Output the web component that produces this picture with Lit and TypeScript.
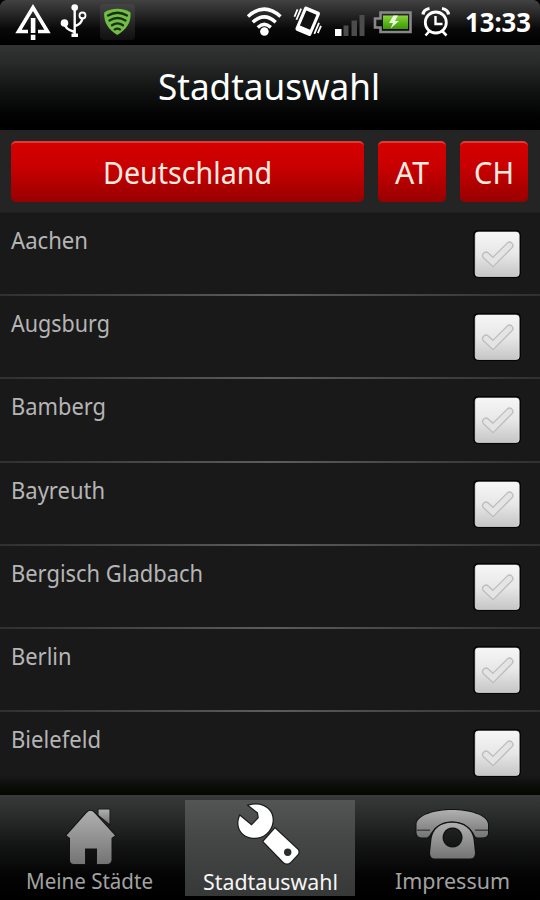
import { LitElement, html, css, svg } from "lit";
import { customElement, property } from "lit/decorators.js";

/** One line of text condensed or stretched to a set width. */
@customElement("fit-text")
class FitText extends LitElement {
  @property() text = "";
  @property({ type: Number }) size = 24;
  @property({ type: Number }) width = 100;
  @property({ type: Number }) weight = 400;

  static styles = css`
    :host { display: block; line-height: 0; }
    svg { display: block; overflow: visible; }
    text { font-family: "Noto Sans", "Open Sans", sans-serif; fill: currentColor; }
  `;

  render() {
    const h = Math.round(this.size * 1.3);
    return html`<svg width=${this.width} height=${h}>
      <text x="0" y=${this.size} font-size=${this.size} font-weight=${this.weight}
        textLength=${this.width} lengthAdjust="spacingAndGlyphs">${this.text}</text>
    </svg>`;
  }
}

@customElement("status-bar")
class StatusBar extends LitElement {
  static styles = css`
    :host { display: block; height: 45px; background: linear-gradient(#424242 0, #272727 14px, #080808 29px, #000 44px); }
    .bar { position: relative; height: 45px; }
    svg { display: block; }
    .clock { position: absolute; left: 465px; top: 6px; color: #fff; }
  `;
  render() {
    return html`<div class="bar">
      <svg width="540" height="45" viewBox="0 0 540 45" fill="none">
        <defs>
          <linearGradient id="bt" x1="0" y1="0" x2="0" y2="1">
            <stop offset="0" stop-color="#8fd13c" /><stop offset=".5" stop-color="#5cb81a" /><stop offset="1" stop-color="#3f960b" />
          </linearGradient>
          <linearGradient id="tile" x1="0" y1="0" x2="0" y2="1">
            <stop offset="0" stop-color="#484848" /><stop offset="1" stop-color="#151515" />
          </linearGradient>
        </defs>
        <path d="M0 0H6Q1 1 0 6ZM540 0H534Q539 1 540 6Z" fill="#000" />
        <path d="M28 31.5H18.5L33 7.5L47.5 31.5H38" stroke="#fff" stroke-width="3.6" />
        <path d="M30.8 18H35.4V33H30.8ZM30.8 34.8H35.4V40H30.8Z" fill="#fff" />
        <g stroke="#fff" stroke-width="2.4">
          <path d="M74.7 8V35M64.5 23Q64.5 29 74.5 32M75 26Q82 24 82.5 17.5" />
          <circle cx="82.5" cy="15.5" r="3" stroke-width="1.8" />
        </g>
        <circle cx="74.7" cy="7.5" r="3.3" fill="#fff" /><circle cx="64.5" cy="23" r="3.8" fill="#fff" />
        <path d="M71.5 33.5H78V37H71.5Z" fill="#fff" />
        <rect x="100" y="4" width="35" height="36" rx="4" fill="url(#tile)" opacity=".75" />
        <path d="M117.3 8.7C112 8.7 108 9.8 104.2 12.5C103.5 23 109 30 117.3 35C125.8 30 131.3 23 130.6 12.5C126.8 9.8 122.6 8.7 117.3 8.7Z" fill="#72bd45" />
        <g stroke="#173012" stroke-width="2.3" stroke-linecap="round">
          <path d="M108 15.5Q117.5 10 127 15.5M109.5 20.5Q117.5 15.5 125.5 20.5M112 25.3Q117.5 21.5 123 25.3M114.7 29.4Q117.4 27.8 120 29.4" />
        </g>
        <g stroke="#fff" stroke-width="3.5">
          <path d="M248 16.5Q264.2 1.8 280.5 16.5M252.8 22.3Q264.2 11.5 275.7 22.3M257.8 27.4Q264.2 21.3 270.8 27.4" />
        </g>
        <circle cx="264.4" cy="31.5" r="4.3" fill="#fff" />
        <g transform="translate(307.7 21.3) rotate(23)">
          <rect x="-8.5" y="-13" width="17" height="26" rx="2" fill="#fff" />
          <rect x="-5.5" y="-9.4" width="11" height="16.3" fill="#111" />
          <path d="M-11-9V3M-14-7V1M11-3V9M14-1V7" stroke="#fff" stroke-width="1.8" />
        </g>
        <path d="M335 29H341.5V36H335Z" fill="#fff" />
        <path d="M343.5 25.5H348.5V36H343.5ZM351.5 20.5H357V36H351.5ZM359.5 15H364.5V36H359.5Z" fill="#4c4c4c" />
        <path d="M380.5 12.5H410.5V32H380.5V27.5H375V18.5H380.5Z" stroke="#888" stroke-width="2.6" />
        <rect x="383" y="15.5" width="25" height="13.5" fill="url(#bt)" />
        <path d="M393.5 15.5L389 23H393L390.5 28.5L399 21H395L398 15.5Z" fill="#e6f7dc" />
        <g stroke="#fff">
          <circle cx="435.8" cy="22.5" r="10.5" stroke-width="2.8" />
          <path d="M435.5 16V24H442.5" stroke-width="2.4" />
          <path d="M423 14.5Q423.5 9.5 429.5 8.5M448.5 14.5Q448 9.5 442 8.5" stroke-width="3.2" />
          <path d="M429.5 31L425.5 35.5M442.2 31L446.5 35.5" stroke-width="2.6" />
        </g>
      </svg>
      <fit-text class="clock" text="13:33" .size=${26} .width=${66} .weight=${700}></fit-text>
    </div>`;
  }
}

const HOUSE = svg`<path d="M98.5 28.5H109.5V43L98.5 34Z" fill="url(#g)" stroke="#111" stroke-width="1.6" paint-order="stroke"/>
  <path d="M66.5 54.5L86.5 32Q90.5 27.5 94.5 32L115 54.5L111.5 57V79Q111 83 107 83H97V67.5H85V83H74Q70 83 70 79V57Z" fill="url(#g)" stroke="#111" stroke-width="2" paint-order="stroke"/>`;

const WRENCH = svg`<g fill="#fff" stroke="#1c1c1c" stroke-width="2.4" paint-order="stroke">
    <path d="M65 5.5C80 1.5 90 11 88.5 22C87 33 77 39.5 67 37.5C57 35.5 51.5 26.5 56 16L67.5 25.5L74.8 18L74 12.5Z"/>
    <path d="M91 28.5L113.5 49.5Q115.5 52 113.5 54.5L106.5 62Q103 65 99.5 62L79.5 41.5Z"/>
  </g>
  <circle cx="103.7" cy="52.3" r="3.7" fill="#2c2c2c"/>`;

const PHONE = svg`<g transform="translate(5 1)"><path d="M56.5 42C58 33 75 28 92 28S127 33 128 42V52Q127 55.5 122 55.5H117Q115 55 113.5 51Q106 39.5 92 39.5T71 51Q69 55 67 55.5H61Q57 55 56.5 51Z" fill="url(#g)" stroke="#111" stroke-width="2" paint-order="stroke"/>
  <path d="M57 48.2H70M115 48.2H128" stroke="#444" stroke-width="1.5"/>
  <path fill-rule="evenodd" d="M92 40.7C104 40.7 112 47 113.5 57L115 71Q115 76.5 110 76.5H75Q70 76.5 70 71L71.5 57C73 47 80 40.7 92 40.7ZM92.5 45.5A10 10 0 1 0 92.6 45.5Z" fill="url(#g)" stroke="#111" stroke-width="2.4" paint-order="stroke"/></g>`;

const CITIES: [string, number][] = [
  ["Aachen", 77], ["Augsburg", 99], ["Bamberg", 95], ["Bayreuth", 94],
  ["Bergisch Gladbach", 192], ["Berlin", 60.5], ["Bielefeld", 90],
];

@customElement("app-root")
class AppRoot extends LitElement {
  static styles = css`
    :host { display: flex; flex-direction: column; width: 540px; height: 900px; background: #191919; overflow: hidden; }
    .title { height: 85px; flex: none; box-sizing: border-box; padding: 18px 2px 0 0; display: flex; justify-content: center; color: #fff;
      background: linear-gradient(#323433 0, #282a29 18px, #111312 46px, #020202 70px, #000 84px); }
    .tabs { height: 83px; flex: none; box-sizing: border-box; background: #242424; padding: 11px 12px 11px 11px; display: grid; grid-template-columns: 353px 68px 68px; gap: 14px; border-bottom: 1px solid #202020; }
    .btn { height: 61px; box-sizing: border-box; border-radius: 5px; padding-top: 11px; display: flex; justify-content: center; color: #ffebe0;
      background: linear-gradient(#d60000, #c90000 40%, #980000); border-top: 2px solid #e03c37; }
    .list { height: 582px; flex: none; overflow: hidden; background: #191919; }
    .row { height: 83.2px; box-sizing: border-box; display: flex; justify-content: space-between; padding: 12px 19px 0 11px; color: #b5b5b5; position: relative; }
    .row::after { content: ""; position: absolute; left: 0; right: 0; bottom: 0; height: 2px; background: linear-gradient(90deg, #303030, #5c5c5c 50%, #303030); }
    .check { display: block; margin-top: 5px; }
    .nav { height: 105px; flex: none; box-sizing: border-box; display: flex; position: relative;
      background: linear-gradient(#383a39 0, #292b2a 22px, #121413 52px, #040404 80px, #000 104px); }
    .tab { width: 185px; color: #a2a2a2; display: flex; flex-direction: column; align-items: center; }
    .tab.active { width: 170px; height: 96px; margin-top: 5px; background: linear-gradient(#535554, #454746 40%, #373938); color: #f6f6f6; }
    .icon { display: block; height: 72px; flex: none; overflow: visible; }
    .active .icon { height: 68px; }
    .first .label { margin-right: 6px; }
    .last .label { margin-left: 10px; }
    .shade { height: 20px; margin-top: -20px; flex: none; position: relative; background: linear-gradient(transparent, #080a06 70%, #050600); }
  `;

  private check() {
    return html`<svg class="check" width="48" height="48" viewBox="0 0 48 48">
      <defs><linearGradient id="c" x1="0" y1="0" x2="0" y2="1">
        <stop offset="0" stop-color="#f6f6f6"/><stop offset=".5" stop-color="#e7e7e7"/><stop offset="1" stop-color="#c6c6c6"/>
      </linearGradient></defs>
      <rect width="48" height="48" rx="5" fill="#050505"/>
      <rect x="2.2" y="2" width="44" height="44.5" rx="3" fill="url(#c)" stroke="#f2f2f2" stroke-opacity=".6"/>
      <path d="M13 25.5L20 32L36.5 15.5" fill="none" stroke="#bdbdbd" stroke-width="8" stroke-linecap="round"/>
      <path d="M13 25.5L20 32L36.5 15.5" fill="none" stroke="#e4e4e4" stroke-width="5.4" stroke-linecap="round"/>
    </svg>`;
  }

  private tab(label: string, width: number, icon: unknown, kind: string) {
    const active = kind === "active";
    return html`<div class="tab ${kind}">
      <svg class="icon" width=${active ? 170 : 185} height="72">
        <defs><linearGradient id="g" x1="0" y1="0" x2="0" y2="1"><stop offset="0" stop-color="#b0b0b0"/><stop offset="1" stop-color="#747474"/></linearGradient></defs>
        <g transform=${active ? "translate(-1 0)" : "translate(0 -14)"}>${icon}</g>
      </svg>
      <fit-text class="label" .text=${label} .size=${22} .width=${width}></fit-text>
    </div>`;
  }

  render() {
    return html`
      <status-bar></status-bar>
      <div class="title"><fit-text text="Stadtauswahl" .size=${37} .width=${222}></fit-text></div>
      <div class="tabs">
        <div class="btn"><fit-text text="Deutschland" .size=${30} .width=${169}></fit-text></div>
        <div class="btn"><fit-text text="AT" .size=${30} .width=${34}></fit-text></div>
        <div class="btn"><fit-text text="CH" .size=${30} .width=${40}></fit-text></div>
      </div>
      <div class="list">
        ${CITIES.map(([name, width]) => html`<div class="row">
          <fit-text .text=${name} .size=${24} .width=${width}></fit-text>${this.check()}
        </div>`)}
      </div>
      <div class="shade"></div>
      <div class="nav">
        ${this.tab("Meine Städte", 127, HOUSE, "first")}
        ${this.tab("Stadtauswahl", 135, WRENCH, "active")}
        ${this.tab("Impressum", 115, PHONE, "last")}
      </div>`;
  }
}
